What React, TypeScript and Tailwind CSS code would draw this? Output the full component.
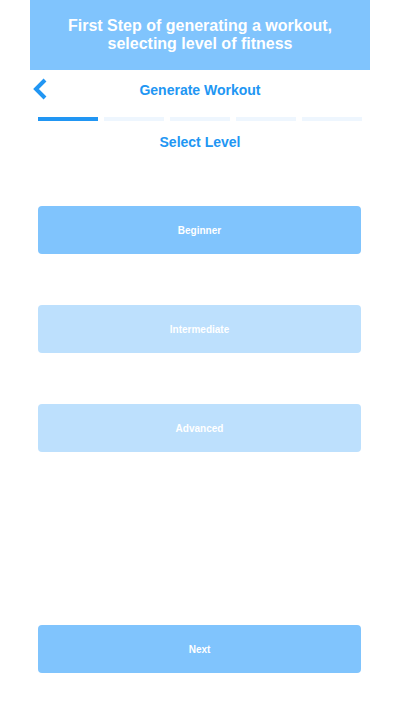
import { useState } from 'react';

const levels = ['Beginner', 'Intermediate', 'Advanced'];

const App = () => {
  const [level, setLevel] = useState(0);

  return (
    <div className="min-h-[712px] bg-white" style={{ fontFamily: 'Arial, "Liberation Sans", sans-serif' }}>
      <div className="ml-[30px] w-[340px] flex flex-col">
        {/* banner */}
        <div className="h-[70px] bg-[#80c4fd] flex items-center justify-center">
          <h1 className="text-white text-[16px] leading-[18px] font-bold text-center">
            First Step of generating a workout,<br />selecting level of fitness
          </h1>
        </div>

        {/* nav row */}
        <div className="relative h-[40px] flex items-center justify-center">
          <button className="absolute left-[2px] top-[8px]">
            <svg width="17" height="22" viewBox="0 0 17 22">
              <path d="M13 2 L4 11 L13 20" fill="none" stroke="#2196f3" strokeWidth="4" />
            </svg>
          </button>
          <p className="text-[#2196f3] text-[14px] font-bold">Generate Workout</p>
        </div>

        {/* steps */}
        <div className="mt-[7px] px-[8px] flex gap-[6px]">
          <div className="h-[4px] flex-1 bg-[#2196f3]" />
          <div className="h-[4px] flex-1 bg-[#eef6fe]" />
          <div className="h-[4px] flex-1 bg-[#eef6fe]" />
          <div className="h-[4px] flex-1 bg-[#eef6fe]" />
          <div className="h-[4px] flex-1 bg-[#eef6fe]" />
        </div>

        <p className="mt-[11px] text-center text-[#2196f3] text-[14px] leading-[20px] font-bold">Select Level</p>

        {/* levels */}
        <div className="mt-[54px] pl-[8px] pr-[9px] flex flex-col gap-[51px]">
          {levels.map((l, i) => (
            <button
              key={l}
              onClick={() => setLevel(i)}
              className={`h-[48px] rounded-[4px] text-white text-[10px] font-bold ${level === i ? 'bg-[#80c4fd]' : 'bg-[#bde0fd]'}`}
            >
              {l}
            </button>
          ))}
        </div>

        <div className="mt-[173px] pl-[8px] pr-[9px]">
          <button className="w-full h-[48px] rounded-[4px] bg-[#80c4fd] text-white text-[10px] font-bold">Next</button>
        </div>
      </div>
    </div>
  );
};

export default App;
